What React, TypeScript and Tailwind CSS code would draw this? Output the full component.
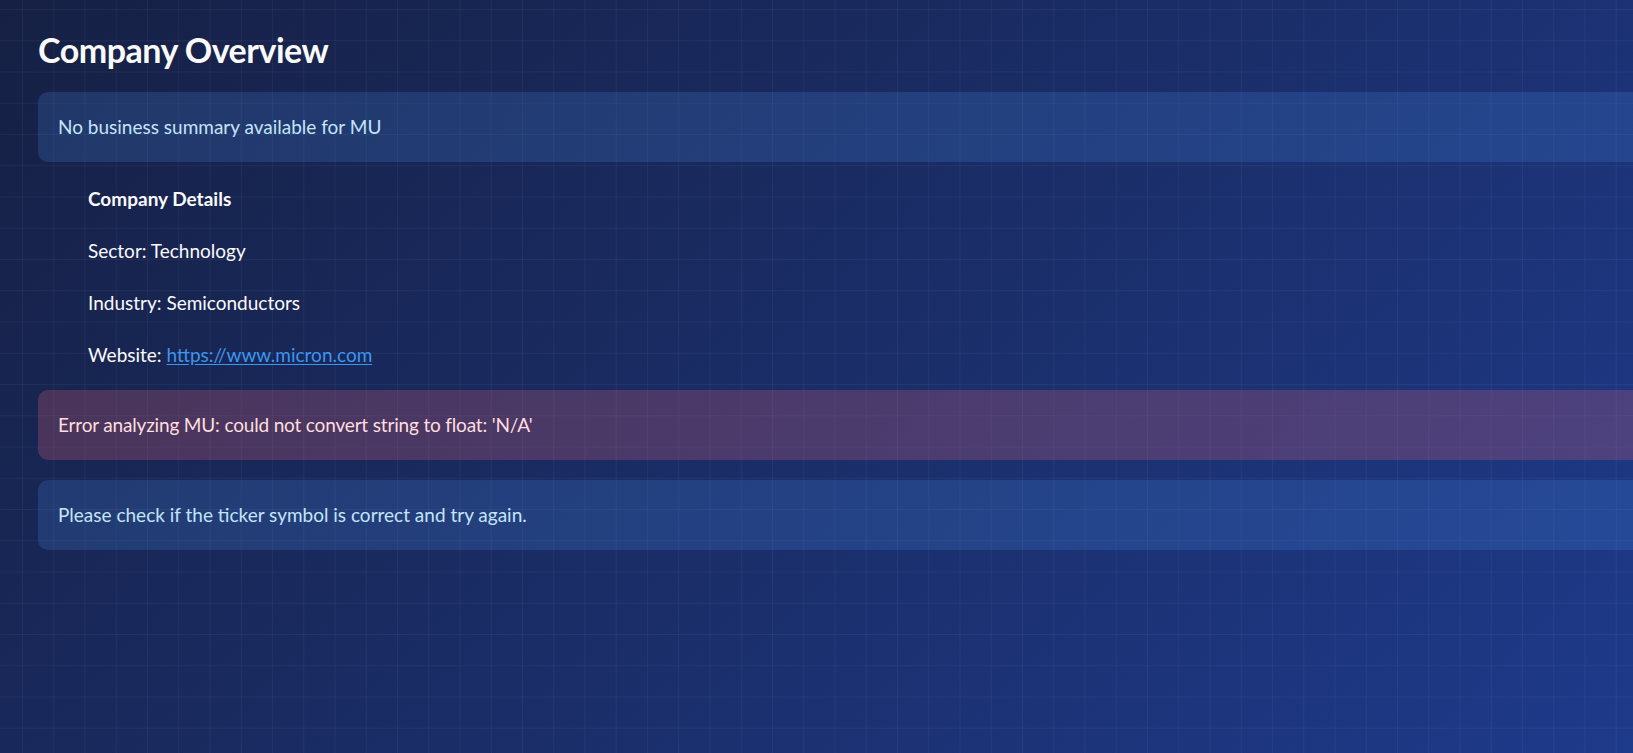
import React from "react";

const sans = "[font-family:Lato,'Noto_Sans',sans-serif]";

export default function App() {
  return (
    <div
      className={`relative w-[1633px] h-[753px] overflow-hidden ${sans} [background-image:linear-gradient(rgba(255,255,255,0.045)_1px,transparent_1px),linear-gradient(90deg,rgba(255,255,255,0.045)_1px,transparent_1px),linear-gradient(135deg,#162044,#1e3a8a)] [background-size:31.25px_31.25px,31.25px_31.25px,100%_100%] [background-position:0_9px,22px_0,0_0]`}
    >
      <div className="flex flex-col w-[1660px] pl-[38px] pt-[28px]">
        <h2 className="h-[43px] text-[34px] leading-[43px] font-bold tracking-[-0.5px] text-[#fafafa]">
          Company Overview
        </h2>

        <div className="mt-[21px] h-[70px] flex items-center pl-[20px] rounded-[10px] bg-[rgba(73,145,235,0.2)] text-[19px] leading-[32px] text-[#c4e4fa]">
          No business summary available for MU
        </div>

        <div className="mt-[21px] pl-[50px] flex flex-col gap-[20px] text-[19px] leading-[32px] text-[#fafafa]">
          <p className="font-bold">Company Details</p>
          <p>Sector: Technology</p>
          <p>Industry: Semiconductors</p>
          <p>
            Website:{" "}
            <a href="#" className="text-[#3b96ee] underline underline-offset-2">
              https://www.micron.com
            </a>
          </p>
        </div>

        <div className="mt-[19px] h-[70px] flex items-center pl-[20px] rounded-[10px] bg-[rgba(225,100,120,0.25)] text-[19px] leading-[32px] tracking-[-0.17px] text-[#ffdede]">
          Error analyzing MU: could not convert string to float: 'N/A'
        </div>

        <div className="mt-[20px] h-[70px] flex items-center pl-[20px] rounded-[10px] bg-[rgba(73,145,235,0.2)] text-[19px] leading-[32px] text-[#c4e4fa]">
          Please check if the ticker symbol is correct and try again.
        </div>
      </div>
    </div>
  );
}
